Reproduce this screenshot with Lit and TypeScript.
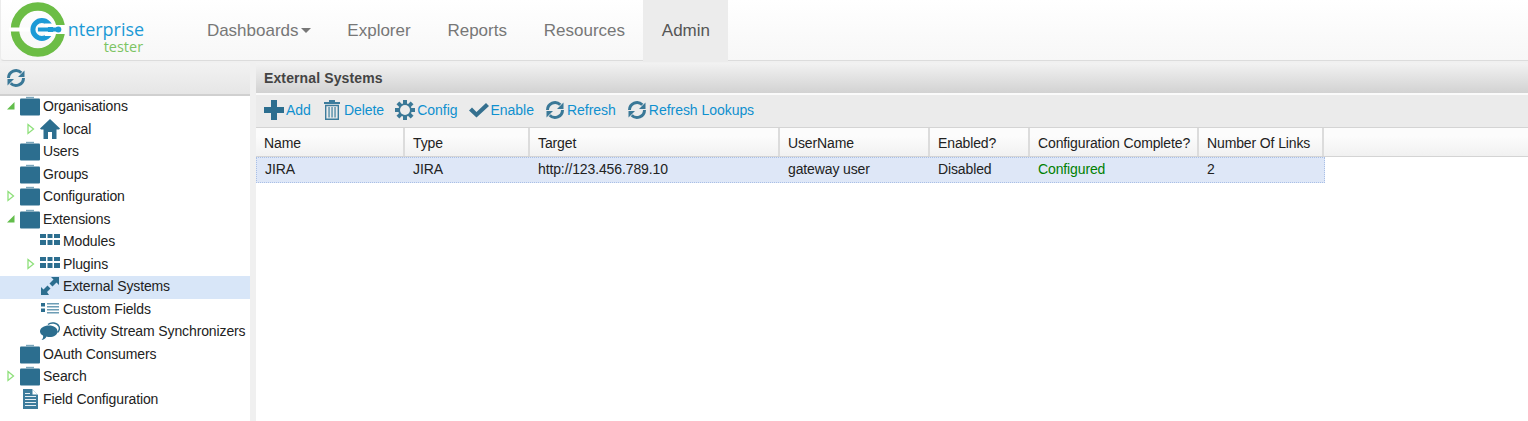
import { LitElement, html, css, svg } from "lit";
import { customElement } from "lit/decorators.js";

const B = "#2c6e8f";
const folder = html`<svg class="ic" width="20" height="20" viewBox="0 0 20 20"><path fill="${B}" d="M0 3.500Q0 2.500 1 2.500H19Q20 2.500 20 3.500V18.500Q20 19.500 19 19.500H1Q0 19.500 0 18.500Z"/><path fill="#7ba6bb" d="M6 0.800H14V2.500H6Z"/></svg>`;
const home = html`<svg class="ic" width="20" height="20" viewBox="0 0 20 20"><path fill="${B}" d="M10 0L20 9.500L19 10.500H16.500V20H12V13H8V20H3.500V10.500H1L0 9.500Z"/></svg>`;
const grid = html`<svg class="ic" width="20" height="20" viewBox="0 0 20 20"><g fill="${B}"><rect x="0" y="3" width="6" height="4"/><rect x="7.500" y="3" width="5" height="4"/><rect x="14" y="3" width="6" height="4"/><rect x="0" y="9" width="6" height="5"/><rect x="7.500" y="9" width="5" height="5"/><rect x="14" y="9" width="6" height="5"/></g></svg>`;
const arrows = html`<svg class="ic" width="20" height="20" viewBox="0 0 20 20"><path fill="${B}" d="M11 1H19V9L16.500 6.500L12.500 10.500L9.500 7.500L13.500 3.500Z"/><path fill="${B}" d="M7.500 9.500L10.500 12.500L7 16L9 19H1V11L3.500 13.500Z"/></svg>`;
const fields = html`<svg class="ic" width="20" height="20" viewBox="0 0 20 20"><g fill="${B}"><rect x="1" y="4" width="4" height="3.500"/><rect x="1" y="9.500" width="4" height="3.500"/></g><g fill="#6d9db5"><rect x="7" y="4" width="12" height="1.500"/><rect x="7" y="7" width="12" height="1.500"/><rect x="7" y="10" width="12" height="1.500"/><rect x="7" y="13" width="12" height="1.500"/></g></svg>`;
const chat = html`<svg class="ic" width="20" height="20" viewBox="0 0 20 20"><path fill="none" stroke="${B}" stroke-width="1.400" d="M8 3.500C11 1 17 1.500 19 5.500C20 8 19 10 17.500 11.500"/><path fill="${B}" d="M9 4.500C14 4.500 17.500 7 17.500 10.500C17.500 14 14 16 9.500 16C8.500 16 7.500 16 6.500 15.500C5.500 17.500 3.500 19 1.500 19C3 17.500 3.500 16 3 14.500C1 13.500 0 12 0 10.500C0 7 4 4.500 9 4.500Z"/></svg>`;
const doc = html`<svg class="ic" width="20" height="20" viewBox="0 0 20 20"><path fill="#3d7c9c" d="M3 0H12L18 6V20H3Z"/><path fill="#fff" d="M12.500 0.500V5.500H17.500Z"/><g fill="#e6eff4"><rect x="5" y="7" width="11" height="1"/><rect x="5" y="10" width="11" height="1"/><rect x="5" y="13" width="11" height="1"/><rect x="5" y="16" width="11" height="1"/><rect x="5" y="4" width="5" height="1"/></g></svg>`;
const refreshPaths = svg`<g fill="none" stroke="#3a7897" stroke-width="3"><path d="M2.500 10A7.500 7.500 0 0 1 15.300 4.700"/><path d="M17.500 10A7.500 7.500 0 0 1 4.700 15.300"/></g><path fill="#3a7897" d="M18.500 2.500V9H12Z"/><path fill="#3a7897" d="M1.500 17.500V11H8Z"/>`;
const refresh = html`<svg class="ic" width="20" height="20" viewBox="0 0 20 20">${refreshPaths}</svg>`;
const plus = html`<svg class="ic" width="20" height="20" viewBox="0 0 20 20"><path fill="${B}" d="M7 0H13V7H20V13H13V20H7V13H0V7H7Z"/></svg>`;
const trash = html`<svg class="ic" width="20" height="20" viewBox="0 0 20 20"><path fill="#3d7c9c" d="M7 0H13V2H18V4H2V2H7Z"/><path fill="none" stroke="#3d7c9c" stroke-width="1.400" d="M3.700 5.500V19.300H16.300V5.500Z"/><g fill="#5f94ad"><rect x="6.300" y="7" width="1.500" height="10.500"/><rect x="9.300" y="7" width="1.500" height="10.500"/><rect x="12.300" y="7" width="1.500" height="10.500"/></g></svg>`;
const gear = html`<svg class="ic" width="20" height="20" viewBox="0 0 20 20"><g fill="#3a7897"><rect x="8" y="0" width="4" height="20"/><rect x="0" y="8" width="20" height="4"/><rect x="8" y="0" width="4" height="20" transform="rotate(45 10 10)"/><rect x="8" y="0" width="4" height="20" transform="rotate(-45 10 10)"/></g><circle cx="10" cy="10" r="6.800" fill="#3a7897"/><circle cx="10" cy="10" r="5" fill="#ebebeb"/></svg>`;
const check = html`<svg class="ic" width="20" height="20" viewBox="0 0 20 20"><path fill="#35708f" d="M0 10.500L3 7.500L7.500 12L17 3L20 6L7.500 17.500Z"/></svg>`;

const tree: { d: number; t: string; ic: unknown; tw?: "o" | "c"; sel?: boolean }[] = [
  { d: 0, t: "Organisations", ic: folder, tw: "o" },
  { d: 1, t: "local", ic: home, tw: "c" },
  { d: 0, t: "Users", ic: folder },
  { d: 0, t: "Groups", ic: folder },
  { d: 0, t: "Configuration", ic: folder, tw: "c" },
  { d: 0, t: "Extensions", ic: folder, tw: "o" },
  { d: 1, t: "Modules", ic: grid },
  { d: 1, t: "Plugins", ic: grid, tw: "c" },
  { d: 1, t: "External Systems", ic: arrows, sel: true },
  { d: 1, t: "Custom Fields", ic: fields },
  { d: 1, t: "Activity Stream Synchronizers", ic: chat },
  { d: 0, t: "OAuth Consumers", ic: folder },
  { d: 0, t: "Search", ic: folder, tw: "c" },
  { d: 0, t: "Field Configuration", ic: doc },
];

const twOpen = html`<svg width="10" height="10" viewBox="0 0 10 10"><path fill="#62bd4b" d="M1 8.500L8.500 1V8.500Z"/></svg>`;
const twClosed = html`<svg width="10" height="12" viewBox="0 0 10 12"><path fill="#fff" stroke="#8ee07a" stroke-width="1.300" d="M2 1.500L7.500 6L2 10.500Z"/></svg>`;

const tools: [string, unknown][] = [
  ["Add", plus],
  ["Delete", trash],
  ["Config", gear],
  ["Enable", check],
  ["Refresh", refresh],
  ["Refresh Lookups", refresh],
];

const cols: [string, string, string?][] = [
  ["Name", "JIRA"],
  ["Type", "JIRA"],
  ["Target", "http://123.456.789.10"],
  ["UserName", "gateway user"],
  ["Enabled?", "Disabled"],
  ["Configuration Complete?", "Configured", "ok"],
  ["Number Of Links", "2"],
];

@customElement("app-root")
export class AppRoot extends LitElement {
  static styles = css`
    :host {
      display: block;
      width: 1528px;
      height: 421px;
      overflow: hidden;
      background: #f0f0f0;
      font-family: "Liberation Sans", Arial, sans-serif;
      font-size: 14px;
      letter-spacing: -0.12px;
      color: #222;
    }
    .ic { display: block; flex: none; }
    .top {
      height: 61px;
      box-sizing: border-box;
      display: flex;
      background: linear-gradient(#ffffff, #f7f7f7);
      border-bottom: 1px solid #dcdcdc;
      border-left: 1px solid #ececec;
      border-bottom-left-radius: 4px;
    }
    .logo { width: 187.500px; flex: none; display: block; }
    .logo text { font-family: "Open Sans", sans-serif; letter-spacing: 0; }
    .nav { display: flex; }
    .nav a {
      display: block;
      padding: 0 18.400px;
      line-height: 61px;
      font-size: 17px;
      color: #777;
      letter-spacing: 0;
    }
    .nav a.active { background: #ececec; color: #555; height: 62px; }
    .caret {
      display: inline-block;
      width: 0;
      height: 0;
      margin-left: 2px;
      vertical-align: 3px;
      border-left: 5.500px solid transparent;
      border-right: 5.500px solid transparent;
      border-top: 5px solid #777;
    }
    .body { display: flex; gap: 6px; padding-top: 2px; height: 358px; }
    .side { width: 250px; background: #fff; flex: none; }
    .side-head {
      height: 33px;
      box-sizing: border-box;
      padding: 5px 6px;
      background: linear-gradient(#f2f2f2, #e6e6e6);
      border-bottom: 2px solid #d0d0d0;
    }
    .row {
      height: 22.500px;
      box-sizing: border-box;
      padding-bottom: 2px;
      display: flex;
      align-items: center;
      white-space: nowrap;
      color: #222;
    }
    .row.sel { background: #d8e6f8; }
    .tw { width: 20px; flex: none; display: flex; align-items: center; justify-content: center; padding-left: 2px; box-sizing: border-box; }
    .d0 { padding-left: 0; }
    .d1 { padding-left: 20px; }
    .lbl { margin-left: 3px; }
    .main { flex: 1; background: #fff; min-width: 0; }
    .title {
      height: 32px;
      box-sizing: border-box;
      padding: 0 8px;
      line-height: 31px;
      font-weight: bold;
      font-size: 14px;
      letter-spacing: 0.12px;
      color: #444;
      background: linear-gradient(#f2f2f2, #d2d2d2);
      border-bottom: 2px solid #fafafa;
    }
    .bar {
      height: 33px;
      box-sizing: border-box;
      display: flex;
      align-items: center;
      padding: 0 0 2px 8px;
      gap: 11.100px;
      background: #ebebeb;
      border-bottom: 1px solid #d4d4d4;
      letter-spacing: -0.04px;
    }
    .tool { display: flex; align-items: center; color: #0f90cf; gap: 2px; white-space: nowrap; }
    .hrow {
      display: flex;
      background: linear-gradient(#fcfcfc 30%, #f1f1f1);
      border-bottom: 1px solid #d4d4d4;
      height: 29px;
      box-sizing: border-box;
    }
    .gridh {
      display: grid;
      grid-template-columns: 149px 125px 250px 150px 100px 169px 125px;
    }
    .hc {
      padding: 0 8px;
      line-height: 30px;
      color: #222;
      border-right: 2px solid #dcdcdc;
      white-space: nowrap;
      overflow: hidden;
    }
    .drow {
      height: 26px;
      box-sizing: border-box;
      background: #dee7f7;
      border: 1px dotted #a9bfe6;
      width: 1069px;
      display: grid;
      grid-template-columns: 148px 125px 250px 150px 100px 169px 125px;
    }
    .dc { padding: 0 8px; line-height: 22px; white-space: nowrap; color: #222; }
    .dc.ok { color: #008000; }
  `;

  render() {
    return html`
      <div class="top">
        <svg class="logo" width="188" height="60" viewBox="0 0 188 60">
          <circle cx="37" cy="29.500" r="23" fill="none" stroke="#6cbd45" stroke-width="8.500"/>
          <path fill="#ffffff" d="M8 27.500H30V31.500H8ZM48 25H66V34H48Z"/>
          <circle cx="41" cy="29.500" r="9" fill="none" stroke="#1c9ad6" stroke-width="5"/>
          <path fill="#ffffff" d="M44 23.500H54V27H44ZM44 32H54V36H44Z"/>
          <path fill="#1c9ad6" d="M37 27.500H57V31.500H37Z"/>
          <circle cx="57.500" cy="29.500" r="3" fill="#1c9ad6"/>
          <text x="67" y="36" font-size="18" fill="#1c9ad6">nterprise</text>
          <text x="103" y="52" font-size="14.500" fill="#7cc464">tester</text>
        </svg>
        <nav class="nav">
          <a>Dashboards<span class="caret"></span></a>
          <a>Explorer</a>
          <a>Reports</a>
          <a>Resources</a>
          <a class="active">Admin</a>
        </nav>
      </div>
      <div class="body">
        <aside class="side">
          <div class="side-head">${refresh}</div>
          <div class="tree">
            ${tree.map(
              (n) => html`<div class="row d${n.d} ${n.sel ? "sel" : ""}">
                <span class="tw">${n.tw === "o" ? twOpen : n.tw === "c" ? twClosed : ""}</span>
                ${n.ic}
                <span class="lbl">${n.t}</span>
              </div>`
            )}
          </div>
        </aside>
        <section class="main">
          <div class="title">External Systems</div>
          <div class="bar">
            ${tools.map(([t, ic]) => html`<span class="tool">${ic}${t}</span>`)}
          </div>
          <div class="hrow">
            <div class="gridh">${cols.map((c) => html`<div class="hc">${c[0]}</div>`)}</div>
          </div>
          <div class="drow">
            ${cols.map((c) => html`<div class="dc ${c[2] ?? ""}">${c[1]}</div>`)}
          </div>
        </section>
      </div>
    `;
  }
}
